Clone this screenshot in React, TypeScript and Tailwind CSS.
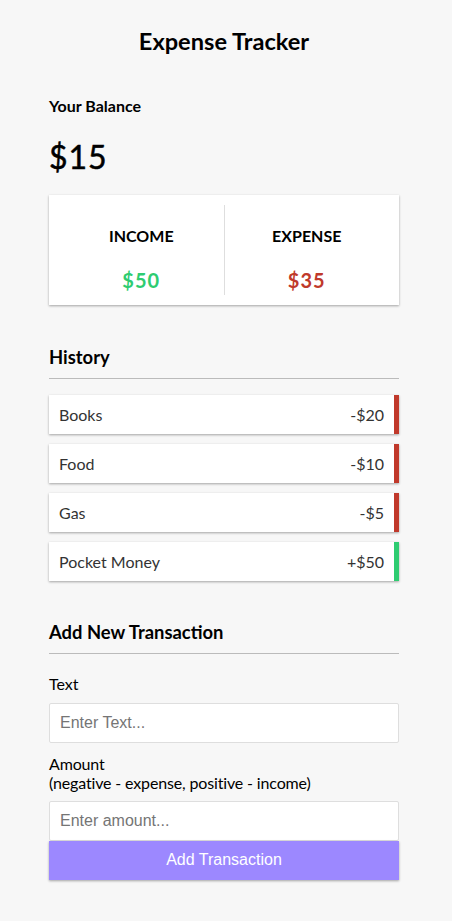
export default function App() {
  const items = [
    { text: 'Books', amount: '-$20', minus: true },
    { text: 'Food', amount: '-$10', minus: true },
    { text: 'Gas', amount: '-$5', minus: true },
    { text: 'Pocket Money', amount: '+$50', minus: false },
  ];

  return (
    <div className="min-h-screen bg-[#f7f7f7] font-['Lato','Liberation_Sans',sans-serif] text-black">
      <div className="w-[350px] ml-[49px] pb-10">
        <h2 className="pt-[27px] text-center text-[23.6px] font-bold leading-[28px]">
          Expense Tracker
        </h2>

        <h4 className="mt-[39px] text-base font-bold leading-6">Your Balance</h4>
        <h1 className="mt-[19px] text-[32px] font-normal leading-[40px] tracking-[1px] [-webkit-text-stroke:0.5px_black]">
          $15
        </h1>

        <div className="mt-[18px] bg-white p-[10px] flex shadow-[0_1px_3px_rgba(0,0,0,0.12),0_1px_2px_rgba(0,0,0,0.24)]">
          <div className="flex-1 h-[90px] text-center border-r border-[#dedede]">
            <h4 className="mt-[19px] text-base font-bold leading-6 uppercase">Income</h4>
            <p className="mt-[20px] text-[20px] font-bold leading-6 tracking-[1px] text-[#2ecc71]">$50</p>
          </div>
          <div className="flex-1 h-[90px] text-center">
            <h4 className="mt-[19px] text-base font-bold leading-6 uppercase">Expense</h4>
            <p className="mt-[20px] text-[20px] font-bold leading-6 tracking-[1px] text-[#c0392b]">$35</p>
          </div>
        </div>

        <h3 className="mt-[40px] text-[18.4px] font-bold leading-6 pb-[9px] border-b border-[#bbb]">History</h3>
        <ul className="mt-[16px] flex flex-col gap-[10px]">
          {items.map((item) => (
            <li
              key={item.text}
              className={`bg-white text-[#333] flex justify-between pl-[10px] pr-[10px] py-[10px] text-base leading-[19px] border-r-[5px] shadow-[0_1px_3px_rgba(0,0,0,0.12),0_1px_2px_rgba(0,0,0,0.24)] ${
                item.minus ? 'border-[#c0392b]' : 'border-[#2ecc71]'
              }`}
            >
              <span>{item.text}</span>
              <span>{item.amount}</span>
            </li>
          ))}
        </ul>

        <h3 className="mt-[39px] text-[18.4px] font-bold leading-6 pb-[9px] border-b border-[#bbb]">
          Add New Transaction
        </h3>
        <form>
          <label className="block mt-[18px] text-base leading-6">Text</label>
          <input
            type="text"
            placeholder="Enter Text..."
            className="block mt-[7px] w-full h-[40px] bg-white border border-[#dedede] rounded-[2px] px-[10px] text-base font-['Liberation_Sans',Arial,sans-serif] placeholder:text-[#757575] outline-none"
          />
          <label className="block mt-[11px] text-base leading-[19px] tracking-[-0.15px]">
            Amount
            <br />
            (negative - expense, positive - income)
          </label>
          <input
            type="number"
            placeholder="Enter amount..."
            className="block mt-[9px] w-full h-[40px] bg-white border border-[#dedede] rounded-[2px] px-[10px] text-base font-['Liberation_Sans',Arial,sans-serif] placeholder:text-[#757575] outline-none"
          />
          <button
            type="button"
            className="block w-full h-[39px] pb-[2px] bg-[#9c88ff] text-white text-base font-['Liberation_Sans',Arial,sans-serif] shadow-[0_1px_3px_rgba(0,0,0,0.12),0_1px_2px_rgba(0,0,0,0.24)]"
          >
            Add Transaction
          </button>
        </form>
      </div>
    </div>
  );
}
